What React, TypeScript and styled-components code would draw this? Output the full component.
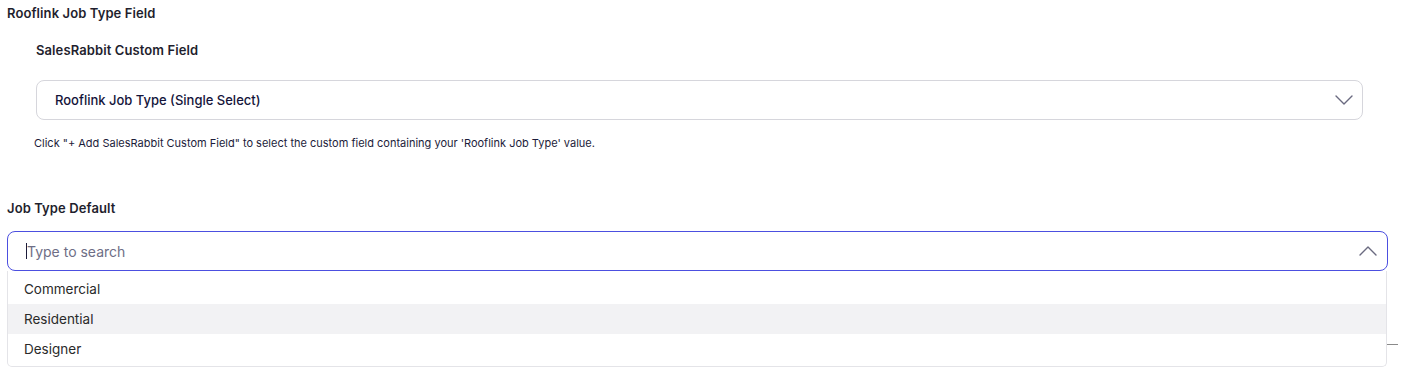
import styled, { createGlobalStyle } from "styled-components";

const GlobalStyle = createGlobalStyle`
  body {
    margin: 0;
    background: #ffffff;
    font-family: Inter, "Liberation Sans", sans-serif;
    color: #1c1c3a;
  }
`;

const Page = styled.div`
  width: 1405px;
  height: 374px;
  padding: 0 7px;
  box-sizing: border-box;
  overflow: hidden;
`;

const SectionTitle = styled.h3`
  margin: 0;
  font-size: 13px;
  font-weight: 600;
  line-height: 16px;
  letter-spacing: 0.1px;
  color: #1f1f2e;
`;

const Nested = styled.div`
  padding-left: 29px;
  padding-right: 35px;
`;

const FieldLabel = styled.h4`
  margin: 0;
  font-size: 13px;
  font-weight: 600;
  line-height: 16px;
  letter-spacing: 0.1px;
  color: #1f1f2e;
`;

const SelectBox = styled.div`
  display: flex;
  align-items: center;
  justify-content: space-between;
  height: 40px;
  box-sizing: border-box;
  border: 1px solid #d6d6dc;
  border-radius: 8px;
  padding: 0 9px 0 18px;
  font-size: 13px;
  font-weight: 500;
  color: #14143a;
`;

const HelpText = styled.p`
  margin: 0;
  margin-left: -2px;
  font-size: 11px;
  line-height: 14px;
  color: #1c1c3a;
`;

const ComboWrap = styled.div`
  position: relative;
  margin-right: 10px;
`;

const SearchBox = styled.div`
  display: flex;
  align-items: center;
  height: 40px;
  box-sizing: border-box;
  border: 1px solid #4c4fe0;
  border-radius: 8px;
  padding: 0 10px 0 18px;
`;

const Caret = styled.span`
  width: 1px;
  height: 16px;
  background: #1c1c3a;
`;

const SearchInput = styled.input`
  flex: 1;
  border: none;
  outline: none;
  background: transparent;
  padding: 0;
  font-family: inherit;
  font-size: 14px;
  color: #1c1c3a;
  &::placeholder {
    color: #6e6e86;
  }
`;

const Rule = styled.div`
  height: 1px;
  background: #8a8a8a;
  margin-top: 73px;
  margin-right: -10px;
`;

const Menu = styled.ul`
  position: absolute;
  top: 40px;
  left: 0;
  right: 1px;
  margin: 0;
  padding: 3px 0 2px;
  list-style: none;
  background: #ffffff;
  border: 1px solid #e4e4e8;
  border-top: none;
  border-radius: 0 0 5px 5px;
`;

const Option = styled.li<{ $active?: boolean }>`
  height: 30px;
  line-height: 30px;
  padding-left: 16px;
  font-size: 13.5px;
  color: #2a2a2a;
  background: ${({ $active }) => ($active ? "#f2f2f4" : "transparent")};
`;

function Chevron({ up }: { up?: boolean }) {
  return (
    <svg width="18" height="10" viewBox="0 0 18 10" fill="none">
      <path
        d={up ? "M1 9L9 1L17 9" : "M1 1L9 9L17 1"}
        stroke="#6a6a80"
        strokeWidth="1.4"
        strokeLinecap="round"
        strokeLinejoin="round"
      />
    </svg>
  );
}

export default function App() {
  const options = ["Commercial", "Residential", "Designer"];
  return (
    <Page>
      <GlobalStyle />
      <SectionTitle style={{ paddingTop: 5 }}>Rooflink Job Type Field</SectionTitle>
      <Nested>
        <FieldLabel style={{ marginTop: 21 }}>SalesRabbit Custom Field</FieldLabel>
        <SelectBox style={{ marginTop: 22 }}>
          <span>Rooflink Job Type (Single Select)</span>
          <Chevron />
        </SelectBox>
        <HelpText style={{ marginTop: 16 }}>
          Click "+ Add SalesRabbit Custom Field" to select the custom field containing your 'Rooflink Job Type' value.
        </HelpText>
      </Nested>
      <SectionTitle style={{ marginTop: 50 }}>Job Type Default</SectionTitle>
      <ComboWrap style={{ marginTop: 15 }}>
        <SearchBox>
          <Caret />
          <SearchInput placeholder="Type to search" />
          <Chevron up />
        </SearchBox>
        <Rule />
        <Menu>
          {options.map((o) => (
            <Option key={o} $active={o === "Residential"}>
              {o}
            </Option>
          ))}
        </Menu>
      </ComboWrap>
    </Page>
  );
}
